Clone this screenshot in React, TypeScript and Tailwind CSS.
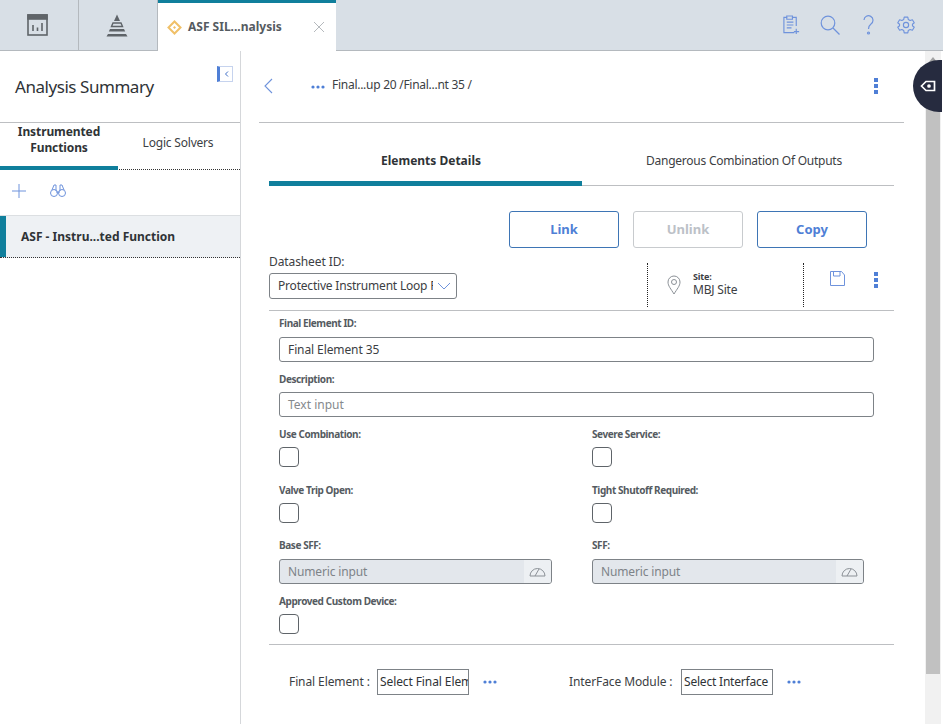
import React from "react";

const Dots = ({ className = "" }: { className?: string }) => (
  <svg width="14" height="4" viewBox="0 0 14 4" className={className}><circle cx="2" cy="2" r="1.6" fill="#4f7fd6" /><circle cx="7" cy="2" r="1.6" fill="#4f7fd6" /><circle cx="12" cy="2" r="1.6" fill="#4f7fd6" /></svg>
);
const Kebab = () => (
  <div className="flex flex-col gap-[2px]"><span className="block w-[4px] h-[4px] bg-[#4f7fd6]" /><span className="block w-[4px] h-[4px] bg-[#4f7fd6]" /><span className="block w-[4px] h-[4px] bg-[#4f7fd6]" /></div>
);
const Label = ({ children }: { children: React.ReactNode }) => (
  <div className="text-[10px] leading-[14px] font-bold tracking-[-0.42px] text-[#555b61]">{children}</div>
);
const Check = () => <div className="mt-[6px] w-[20px] h-[20px] rounded-[4px] border border-[#5f6469] bg-white" />;
const Gauge = () => (
  <svg width="17" height="10" viewBox="0 0 17 10" fill="none" stroke="#8b9096" strokeWidth="1"><path d="M1 9 A7.5 7.5 0 0 1 16 9 Z" /><path d="M6 9 L10 2" /></svg>
);
const Numeric = () => (
  <div className="mt-[7px] h-[25px] rounded-[3px] border border-[#7d8287] bg-[#e3e7ec] flex items-center justify-between overflow-hidden">
    <span className="pl-[8px] text-[12px] tracking-[-0.15px] text-[#7d8388]">Numeric input</span>
    <span className="w-[27px] h-full bg-[#edf0f3] flex items-center justify-center"><Gauge /></span>
  </div>
);

export default function App() {
  return (
    <div className="relative w-[943px] h-[724px] overflow-hidden bg-white text-[#2f3336] font-['Noto_Sans','Open_Sans',sans-serif]">
      <header className="h-[51px] flex bg-[#d8dfe6] border-b border-[#b4b9be]">
        <div className="w-[79px] border-r border-[#b4b9be] flex items-center justify-center pr-[4px]">
          <svg width="21" height="22" viewBox="0 0 21 22" fill="none" stroke="#5f6469" strokeWidth="1.6"><rect x="1" y="1" width="19" height="20" /><rect x="1" y="1" width="19" height="4" fill="#5f6469" /><path d="M6 17V11M10.500 17V13.500M15 17V9" /></svg>
        </div>
        <div className="w-[79px] border-r border-[#b4b9be] flex items-center justify-center pr-[2px]">
          <svg width="24" height="23" viewBox="0 0 24 23" fill="#5f6469"><path d="M12 0.500 L15 7 H9 Z" /><path d="M8 9 H16 L17.500 12.500 H6.500 Z" fill="none" stroke="#5f6469" strokeWidth="1.400" /><path d="M5 15 H19 L20.200 17.500 H3.800 Z" /><path d="M3 20 H21 L22.500 22.500 H1.500 Z" /></svg>
        </div>
        <div className="w-[178px] h-[51px] bg-white border-t-[3px] border-[#107f9c] flex items-center pl-[9px] -mb-px">
          <svg width="15" height="15" viewBox="0 0 15 15" fill="none" stroke="#f0c068" strokeWidth="2"><path d="M7.500 1.500 L13.500 7.500 L7.500 13.500 L1.500 7.500 Z" /><path d="M7.500 6 L9 7.500 L7.500 9 L6 7.500 Z" fill="#f0c068" stroke="none" /></svg>
          <span className="ml-[6px] text-[12px] font-bold text-[#555b61] whitespace-nowrap">ASF SIL...nalysis</span>
          <svg className="ml-[31px]" width="12" height="12" viewBox="0 0 12 12" stroke="#b5b9bd" strokeWidth="1"><path d="M1 1 L11 11 M11 1 L1 11" /></svg>
        </div>
        <div className="flex-1 flex items-center justify-end pr-[28px] gap-[19px]">
          <svg width="19" height="22" viewBox="0 0 20 22" fill="none" stroke="#6f93dc" strokeWidth="1.200"><path d="M13 19 H2 V3 H5 V1.500 H11 V3 H15 V12" /><path d="M5 3 V5 H11 V3" /><path d="M5 8 H12 M5 11 H12 M5 14 H10" /><path d="M15 15 V20.500 M12.500 18 H18" /></svg>
          <svg width="20" height="20" viewBox="0 0 20 20" fill="none" stroke="#6f93dc" strokeWidth="1.200"><circle cx="8" cy="8" r="6.800" /><path d="M13 13 L19.500 19.500" /></svg>
          <svg width="19" height="20" viewBox="0 0 12 20" fill="none" stroke="#6f93dc" strokeWidth="1.200"><path d="M1.500 5 A4.500 4.500 0 1 1 8.500 9 C6.500 10.500 6 11.500 6 14" /><circle cx="6" cy="18" r="1" /></svg>
          <svg width="18" height="18" viewBox="0 0 24 24" fill="none" stroke="#6f93dc" strokeWidth="1.500" strokeLinejoin="round"><path d="M9.600 1.500 H14.400 L15 4.600 L17.500 6 L20.500 5 L23 9 L20.600 11 V13 L23 15 L20.500 19 L17.500 18 L15 19.400 L14.400 22.500 H9.600 L9 19.400 L6.500 18 L3.500 19 L1 15 L3.400 13 V11 L1 9 L3.500 5 L6.500 6 L9 4.600 Z" /><circle cx="12" cy="12" r="3.500" /></svg>
        </div>
      </header>

      <div className="flex h-[673px]">
        <aside className="w-[241px] shrink-0 border-r border-[#d5d7da] flex flex-col">
          <div className="h-[72px] border-b border-[#bdbfc2] flex items-start justify-between">
            <h1 className="mt-[25px] ml-[15px] text-[17px] leading-[22px] tracking-[-0.45px] text-[#2f3336]">Analysis Summary</h1>
            <div className="mt-[15px] mr-[7px] w-[16px] h-[16px] border border-[#c6d3ee] border-l-[3px] border-l-[#4f7fd6] flex items-center justify-center">
              <svg width="5" height="6" viewBox="0 0 5 6" fill="none" stroke="#3f6fc6"><path d="M4 0.500 L1.500 3 L4 5.500" /></svg>
            </div>
          </div>
          <div className="h-[47px] flex border-b border-dotted border-[#333]">
            <div className="w-[118px] h-[47px] border-b-[4px] border-[#107f9c] text-center text-[12px] leading-[16px] font-bold tracking-[-0.1px] text-[#2f3336] pt-[1px]">Instrumented<br />Functions</div>
            <div className="flex-1 text-center text-[12px] leading-[16px] tracking-[-0.2px] pt-[12px] pr-[2px] text-[#3c4043]">Logic Solvers</div>
          </div>
          <div className="h-[46px] flex items-center pl-[12px] pb-[4px] gap-[24px] border-b border-[#dcdfe2]">
            <svg width="14" height="14" viewBox="0 0 14 14" stroke="#6f93dc" strokeWidth="1"><path d="M7 0 V14 M0 7 H14" /></svg>
            <svg width="16" height="14" viewBox="0 0 16 14" fill="none" stroke="#6f93dc" strokeWidth="1"><circle cx="4" cy="9" r="3.500" /><circle cx="12" cy="9" r="3.500" /><path d="M2 6 L4 1 H6 V7 M14 6 L12 1 H10 V7 M6 8 H10" /></svg>
          </div>
          <div className="h-[42px] bg-[#eef1f4] border-b border-dotted border-b-[#333] flex text-[12px] font-bold text-[#2f3336] whitespace-nowrap">
            <div className="w-[6px] bg-[#107f9c]" />
            <div className="pl-[15px] self-center">ASF - Instru...ted Function</div>
          </div>
        </aside>

        <main className="w-[663px] pl-[18px]">
          <div className="h-[72px] w-[645px] border-b border-[#bdbfc2] flex items-center">
            <svg className="ml-[4px] -mt-[2px]" width="10" height="16" viewBox="0 0 10 16" fill="none" stroke="#6f93dc" strokeWidth="1.100"><path d="M9 1 L2 8 L9 15" /></svg>
            <Dots className="ml-[38px]" />
            <span className="ml-[7px] -mt-[3px] text-[12px] tracking-[-0.27px] whitespace-nowrap text-[#3c4043]">Final...up 20 /Final...nt 35 /</span>
            <div className="ml-auto mr-[26px] -mt-[2px]"><Kebab /></div>
          </div>

          <div className="ml-[10px] w-[625px]">
            <div className="h-[63px] flex border-b border-[#bdbfc2]">
              <div className="w-[313px] h-[63px] border-b-[5px] border-[#107f9c] pt-[29px] pl-[11px] text-center text-[12px] leading-[18px] font-bold text-[#2f3336]">Elements Details</div>
              <div className="flex-1 pt-[29px] pl-[12px] text-center text-[12px] leading-[18px] tracking-[-0.25px] text-[#3c4043]">Dangerous Combination Of Outputs</div>
            </div>

            <div className="mt-[25px] flex justify-end gap-[14px] pr-[27px]">
              <button className="w-[110px] h-[37px] rounded-[3px] border border-[#3e75b5] text-[13px] font-bold text-[#4f7fd6]">Link</button>
              <button className="w-[110px] h-[37px] rounded-[3px] border border-[#c8cbce] text-[13px] font-bold text-[#bcc1c7]">Unlink</button>
              <button className="w-[110px] h-[37px] rounded-[3px] border border-[#3e75b5] text-[13px] font-bold text-[#4f7fd6]">Copy</button>
            </div>

            <div className="h-[48px] mt-[15px] flex border-b border-[#bdbfc2]">
              <div className="w-[378px]">
                <div className="text-[12px] leading-[16px] -mt-[9px] tracking-[-0.1px] text-[#3c4043]">Datasheet ID:</div>
                <div className="mt-[3px] w-[188px] h-[26px] rounded-[3px] border border-[#7d8287] flex items-center pl-[8px] overflow-hidden">
                  <span className="w-[155px] overflow-hidden whitespace-nowrap text-[12px] tracking-[-0.2px] text-[#3c4043]">Protective Instrument Loop Final</span>
                  <svg className="ml-[4px] shrink-0" width="14" height="8" viewBox="0 0 14 8" fill="none" stroke="#6f93dc"><path d="M1 1 L7 7 L13 1" /></svg>
                </div>
              </div>
              <div className="w-[157px] h-[44px] border-l border-r border-dotted border-[#222] flex items-center pl-[19px]">
                <svg width="14" height="20" viewBox="0 0 14 20" fill="none" stroke="#8b9096"><path d="M7 19 C4 14 1 11 1 7 A6 6 0 0 1 13 7 C13 11 10 14 7 19 Z" /><circle cx="7" cy="7" r="2.500" /></svg>
                <div className="ml-[12px] -mt-[1px]">
                  <div className="text-[9px] leading-[11px] font-bold tracking-[-0.2px] text-[#3c4043]">Site:</div>
                  <div className="text-[12px] leading-[16px] tracking-[-0.2px] text-[#3c4043]">MBJ Site</div>
                </div>
              </div>
              <div className="flex items-start pt-[8px] pl-[26px] gap-[29px]">
                <svg width="15" height="15" viewBox="0 0 15 15" fill="none" stroke="#6f93dc"><path d="M0.500 0.500 H11.500 L14.500 4 V14.500 H0.500 Z" /><path d="M3.500 0.500 V5 H10 V0.500" /></svg>
                <div className="mt-[1px]"><Kebab /></div>
              </div>
            </div>

            <div className="pl-[10px] pr-[20px] pt-[5px]">
              <Label>Final Element ID:</Label>
              <div className="mt-[7px] h-[25px] rounded-[3px] border border-[#7d8287] flex items-center pl-[8px] text-[12px] tracking-[-0.1px] text-[#3c4043]">Final Element 35</div>
              <div className="mt-[10px]"><Label>Description:</Label></div>
              <div className="mt-[6px] h-[25px] rounded-[3px] border border-[#7d8287] flex items-center pl-[8px] text-[12px] text-[#85898d]">Text input</div>

              <div className="mt-[10px] grid grid-cols-[313px_272px] gap-y-[16px]">
                <div><Label>Use Combination:</Label><Check /></div>
                <div><Label>Severe Service:</Label><Check /></div>
                <div><Label>Valve Trip Open:</Label><Check /></div>
                <div><Label>Tight Shutoff Required:</Label><Check /></div>
                <div className="w-[273px] -mt-[1px]"><Label>Base SFF:</Label><Numeric /></div>
                <div className="-mt-[1px]"><Label>SFF:</Label><Numeric /></div>
              </div>
              <div className="mt-[10px]"><Label>Approved Custom Device:</Label><Check /></div>
            </div>

            <div className="mt-[10px] border-t border-[#bdbfc2] pt-[24px] flex items-center text-[12px] text-[#3c4043]">
              <span className="ml-[20px] w-[88px] whitespace-nowrap tracking-[-0.1px]">Final Element :</span>
              <div className="w-[92px] h-[26px] border border-[#7d8287] flex items-center pl-[2px] overflow-hidden whitespace-nowrap tracking-[-0.1px] text-[#2f3336]">Select Final Element</div>
              <Dots className="ml-[14px]" />
              <span className="ml-[72px] w-[112px] whitespace-nowrap tracking-[-0.1px]">InterFace Module :</span>
              <div className="w-[92px] h-[26px] border border-[#7d8287] flex items-center pl-[2px] whitespace-nowrap tracking-[-0.2px] text-[#2f3336]">Select Interface</div>
              <Dots className="ml-[14px]" />
            </div>
          </div>
        </main>

        <div className="w-[16px] ml-[21px] bg-[#f1f1f1] flex flex-col items-center">
          <svg className="mt-[6px]" width="8" height="5" viewBox="0 0 8 5" fill="#a3a3a3"><path d="M4 0 L8 5 H0 Z" /></svg>
          <div className="mt-[4px] h-[608px] w-[14px] bg-[#c1c1c1]" />
        </div>
      </div>

      <div className="absolute left-[913px] top-[60px] w-[29px] h-[52px] rounded-l-[26px] bg-[#262b3f] flex items-center pl-[7px]">
        <svg width="16" height="12" viewBox="0 0 16 12" fill="none" stroke="#fff" strokeWidth="1.700"><path d="M1.500 6 L6 1.500 H14.500 V10.500 H6 Z" /><circle cx="9" cy="6" r="1" fill="#fff" /></svg>
      </div>
    </div>
  );
}
